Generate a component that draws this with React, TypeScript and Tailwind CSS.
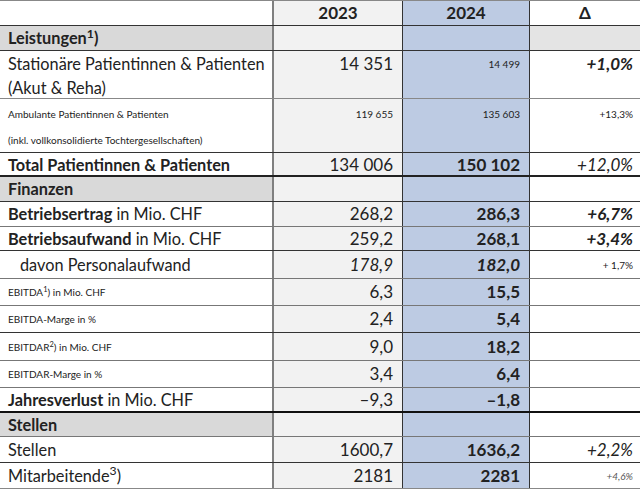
import type { ReactNode } from "react";

const FONT = { fontFamily: 'Lato, Roboto, "Liberation Sans", sans-serif' };

type Row = {
  label: ReactNode;
  y23?: ReactNode;
  y24?: ReactNode;
  delta?: ReactNode;
  h: string;
  line: string;
  section?: boolean;
  top?: boolean;
};

const rows: Row[] = [
  {
    label: (
      <span className="font-bold">
        Leistungen<sup>1</sup>)
      </span>
    ),
    h: "h-[25px]",
    line: "border-b border-[#333]",
    section: true,
  },
  {
    label: (
      <span className="pt-[1px] leading-[24px] whitespace-nowrap">
        Stationäre Patientinnen &amp; Patienten
        <br />
        (Akut &amp; Reha)
      </span>
    ),
    y23: <span className="pt-[1px] text-[17px]">14 351</span>,
    y24: <span className="pt-[1px] text-[10px] leading-[24px]">14 499</span>,
    delta: <span className="pt-[1px] text-[17px] font-bold italic">+1,0%</span>,
    h: "h-[48px]",
    line: "border-b border-[#888]",
    top: true,
  },
  {
    label: (
      <span className="pt-[2px] text-[10px] leading-[26px] whitespace-nowrap">
        Ambulante Patientinnen &amp; Patienten
        <br />
        (inkl. vollkonsolidierte Tochtergesellschaften)
      </span>
    ),
    y23: <span className="pt-[2px] text-[10px] leading-[26px]">119 655</span>,
    y24: <span className="pt-[2px] text-[10px] leading-[26px]">135 603</span>,
    delta: <span className="pt-[2px] text-[10px] leading-[26px]">+13,3%</span>,
    h: "h-[54px]",
    line: "border-b border-[#333]",
    top: true,
  },
  {
    label: <span className="font-bold">Total Patientinnen &amp; Patienten</span>,
    y23: "134 006",
    y24: <span className="font-bold">150 102</span>,
    delta: <span className="italic">+12,0%</span>,
    h: "h-[24px]",
    line: "border-b-2 border-[#222]",
  },
  {
    label: <span className="font-bold">Finanzen</span>,
    h: "h-[25px]",
    line: "border-b border-[#333]",
    section: true,
  },
  {
    label: (
      <span>
        <b>Betriebsertrag</b> in Mio. CHF
      </span>
    ),
    y23: "268,2",
    y24: <span className="font-bold">286,3</span>,
    delta: <span className="font-bold italic">+6,7%</span>,
    h: "h-[25px]",
    line: "border-b border-[#777]",
  },
  {
    label: (
      <span>
        <b>Betriebsaufwand</b> in Mio. CHF
      </span>
    ),
    y23: "259,2",
    y24: <span className="font-bold">268,1</span>,
    delta: <span className="font-bold italic">+3,4%</span>,
    h: "h-[24px]",
    line: "border-b border-[#333]",
  },
  {
    label: <span className="pl-3">davon Personalaufwand</span>,
    y23: <span className="italic">178,9</span>,
    y24: <span className="font-bold italic">182,0</span>,
    delta: <span className="text-[10px]">+ 1,7%</span>,
    h: "h-[28px]",
    line: "border-b border-[#777]",
  },
  {
    label: (
      <span className="text-[10px]">
        EBITDA<sup>1</sup>) in Mio. CHF
      </span>
    ),
    y23: "6,3",
    y24: <span className="font-bold">15,5</span>,
    h: "h-[27px]",
    line: "border-b border-[#777]",
  },
  {
    label: <span className="text-[10px]">EBITDA-Marge in %</span>,
    y23: "2,4",
    y24: <span className="font-bold">5,4</span>,
    h: "h-[27px]",
    line: "border-b border-[#333]",
  },
  {
    label: (
      <span className="text-[10px]">
        EBITDAR<sup>2</sup>) in Mio. CHF
      </span>
    ),
    y23: "9,0",
    y24: <span className="font-bold">18,2</span>,
    h: "h-[28px]",
    line: "border-b border-[#777]",
  },
  {
    label: <span className="text-[10px]">EBITDAR-Marge in %</span>,
    y23: "3,4",
    y24: <span className="font-bold">6,4</span>,
    h: "h-[27px]",
    line: "border-b border-[#777]",
  },
  {
    label: (
      <span>
        <b>Jahresverlust</b> in Mio. CHF
      </span>
    ),
    y23: "–9,3",
    y24: <span className="font-bold">–1,8</span>,
    h: "h-[25px]",
    line: "border-b-2 border-[#111]",
  },
  {
    label: <span className="font-bold">Stellen</span>,
    h: "h-[24px]",
    line: "border-b border-[#777]",
    section: true,
  },
  {
    label: "Stellen",
    y23: "1600,7",
    y24: <span className="font-bold">1636,2</span>,
    delta: <span className="italic">+2,2%</span>,
    h: "h-[26px]",
    line: "border-b border-[#333]",
  },
  {
    label: (
      <span>
        Mitarbeitende<sup>3</sup>)
      </span>
    ),
    y23: "2181",
    y24: <span className="font-bold">2281</span>,
    delta: <span className="text-[10px] italic text-[#555]">+4,6%</span>,
    h: "h-[26px]",
    line: "border-b border-[#888]",
  },
];

function TableRow({ row, first }: { row: Row; first?: boolean }) {
  const align = row.top ? "items-start" : "items-center";
  return (
    <div className={`grid grid-cols-[274px_128px_128px_110px] overflow-hidden ${row.h} ${row.line}`}>
      <div
        className={`flex ${align} border-r-2 border-[#808080] pl-2 text-[16.3px] ${
          row.section ? "bg-[#d9d9d9]" : "bg-white"
        }`}
      >
        {row.label}
      </div>
      <div className={`flex ${align} justify-end bg-[#f2f2f2] pr-[9px]`}>{row.y23}</div>
      <div
        className={`flex ${align} justify-end border-x border-[#333] bg-[#bdcbe3] pr-[9px]`}
      >
        {row.y24}
      </div>
      <div
        className={`flex ${align} justify-end pr-[7px] ${
          row.section && first ? "bg-[#e4e4e4]" : "bg-white"
        }`}
      >
        {row.delta}
      </div>
    </div>
  );
}

export default function App() {
  return (
    <div className="h-[493px] w-[640px] bg-white text-[17px] leading-[24px] text-[#222]" style={FONT}>
      <div className="border-t border-[#888]">
        <div className="grid h-[25px] grid-cols-[274px_128px_128px_110px] border-b border-[#333] font-bold">
          <div className="border-r-2 border-[#808080] bg-white" />
          <div className="flex items-center justify-center bg-[#f2f2f2]">2023</div>
          <div className="flex items-center justify-center border-x border-[#333] bg-[#bdcbe3]">
            2024
          </div>
          <div className="flex items-center justify-center bg-white">Δ</div>
        </div>
        {rows.map((r, i) => (
          <TableRow key={i} row={r} first={i === 0} />
        ))}
      </div>
    </div>
  );
}
